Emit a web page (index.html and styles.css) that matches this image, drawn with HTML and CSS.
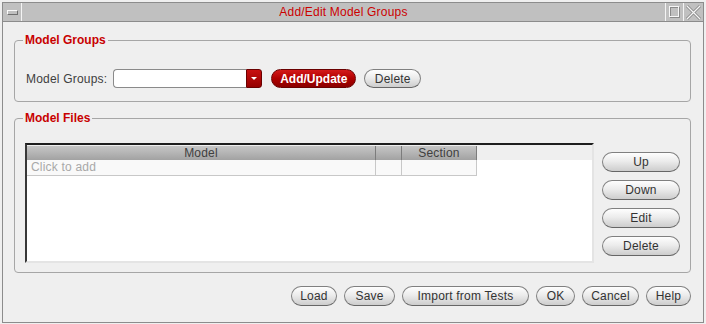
FILE: index.html
```html
<!DOCTYPE html>
<html lang="en">
<head>
    <meta charset="UTF-8">
    <meta name="viewport" content="width=device-width, initial-scale=1.0">
    <link rel="stylesheet" href="styles.css">
    <title>Add/Edit Model Groups</title>
</head>
<body>
    <div class="window">
        <div class="titlebar">
            <div class="tb-menu"><span class="tb-menu-bar"></span></div>
            <div class="tb-title">Add/Edit Model Groups</div>
            <div class="tb-max">
                <svg width="17" height="18" viewBox="0 0 17 18">
                    <rect x="4.5" y="4.5" width="9" height="10" fill="none" stroke="#8a8a8a"/>
                    <rect x="3.5" y="3.5" width="9" height="10" fill="none" stroke="#f6f6f6"/>
                </svg>
            </div>
            <div class="tb-close">
                <svg width="19" height="18" viewBox="0 0 19 18">
                    <path d="M3 3 L16 16 M16 3 L3 16" stroke="#8a8a8a" stroke-width="3" fill="none"/>
                    <path d="M3 3 L16 16 M16 3 L3 16" stroke="#f6f6f6" stroke-width="1.2" fill="none"/>
                </svg>
            </div>
        </div>

        <div class="content">
            <fieldset class="group">
                <legend>Model Groups</legend>
                <div class="group-row">
                    <span class="label">Model Groups:</span>
                    <div class="combo">
                        <div class="combo-field"></div>
                        <div class="combo-arrow"><span class="tri"></span></div>
                    </div>
                    <button class="btn btn-red">Add/Update</button>
                    <button class="btn btn-top">Delete</button>
                </div>
            </fieldset>

            <fieldset class="group files">
                <legend>Model Files</legend>
                <div class="files-body">
                    <div class="table">
                        <div class="thead">
                            <div class="th">Model</div>
                            <div class="th"></div>
                            <div class="th">Section</div>
                        </div>
                        <div class="trow">
                            <div class="td hint">Click to add</div>
                            <div class="td"></div>
                            <div class="td"></div>
                        </div>
                    </div>
                    <div class="side-buttons">
                        <button class="btn btn-side">Up</button>
                        <button class="btn btn-side">Down</button>
                        <button class="btn btn-side">Edit</button>
                        <button class="btn btn-side">Delete</button>
                    </div>
                </div>
            </fieldset>

            <div class="footer">
                <button class="btn btn-load">Load</button>
                <button class="btn btn-save">Save</button>
                <button class="btn btn-import">Import from Tests</button>
                <button class="btn btn-ok">OK</button>
                <button class="btn btn-cancel">Cancel</button>
                <button class="btn btn-help">Help</button>
            </div>
        </div>
    </div>
</body>
</html>
```
FILE: styles.css
```css
* {
    box-sizing: border-box;
}
html, body {
    margin: 0;
    padding: 0;
}
body {
    width: 706px;
    height: 324px;
    overflow: hidden;
    background-color: #efefef;
    font-family: "Liberation Sans", Arial, sans-serif;
    font-size: 12px;
    letter-spacing: 0.2px;
    color: #333;
}
.window {
    margin: 2px 0 0 2px;
    width: 702px;
    height: 321px;
    border: 1px solid #8c8c8c;
    background-color: #efefef;
    display: flex;
    flex-direction: column;
}

/* title bar */
.titlebar {
    height: 19px;
    display: flex;
    background-color: #c0c0c0;
    border-bottom: 1px solid #8c8c8c;
}
.tb-menu {
    width: 19px;
    border-right: 1px solid #f4f4f4;
    display: flex;
    align-items: center;
    justify-content: center;
}
.tb-menu-bar {
    width: 11px;
    height: 5px;
    border-top: 1px solid #fafafa;
    border-left: 1px solid #fafafa;
    border-bottom: 1px solid #6e6e6e;
    border-right: 1px solid #6e6e6e;
}
.tb-title {
    flex: 1;
    text-align: center;
    line-height: 18px;
    color: #cc0000;
}
.tb-max {
    width: 18px;
    border-left: 1px solid #f4f4f4;
}
.tb-close {
    width: 20px;
    border-left: 1px solid #f4f4f4;
}
.tb-max svg, .tb-close svg {
    display: block;
}

/* content */
.content {
    flex: 1;
    padding: 11px 12px 0 11px;
}
.group {
    margin: 0;
    padding: 0;
    min-width: 0;
    border: 1px solid #a6a6a6;
    border-radius: 4px;
}
.group legend {
    margin-left: 8px;
    padding: 0 2px;
    font-weight: bold;
    color: #c80000;
    line-height: 14px;
    letter-spacing: 0;
}
.group-row {
    display: flex;
    align-items: center;
    padding: 22px 0 13px 11px;
}
.label {
    color: #404040;
    margin-right: 6px;
}
.combo {
    display: flex;
    width: 149px;
    height: 19px;
    margin-right: 9px;
}
.combo-field {
    flex: 1;
    background-color: #fff;
    border: 1px solid #8a8a8a;
    border-right: none;
    border-radius: 4px 0 0 4px;
}
.combo-arrow {
    width: 16px;
    background: linear-gradient(#c81010, #960000);
    border: 1px solid #6a0000;
    border-radius: 0 3px 3px 0;
    display: flex;
    align-items: center;
    justify-content: center;
}
.tri {
    width: 0;
    height: 0;
    border-left: 3px solid transparent;
    border-right: 3px solid transparent;
    border-top: 3px solid #fff;
}

/* buttons */
.btn {
    height: 20px;
    padding: 0;
    border: 1px solid #808080;
    border-bottom-color: #666;
    border-radius: 10px;
    background: linear-gradient(#fefefe, #ececec 45%, #cdcdcd);
    font-family: "Liberation Sans", Arial, sans-serif;
    font-size: 12px;
    letter-spacing: 0.2px;
    line-height: 18px;
    color: #333;
}
.btn-red {
    width: 85px;
    height: 19px;
    margin-right: 8px;
    font-weight: bold;
    letter-spacing: 0;
    color: #fff;
    border-color: #6a0000;
    background: linear-gradient(#d41a1a, #b00000 50%, #8a0000);
}
.btn-top {
    width: 57px;
    height: 19px;
}
.btn-load { width: 46px; }
.btn-save { width: 51px; }
.btn-import { width: 127px; }
.btn-ok { width: 39px; }
.btn-cancel { width: 57px; }
.btn-help { width: 45px; }

/* model files table */
.files {
    margin-top: 9px;
}
.files-body {
    display: flex;
    gap: 8px;
    padding: 18px 9px 9px 10px;
}
.table {
    width: 569px;
    height: 120px;
    border-style: solid;
    border-width: 2px;
    border-color: #1e1e1e #e4e4e4 #e4e4e4 #383838;
    background-color: #fff;
}
.thead {
    display: grid;
    grid-template-columns: 349px 26px 75px;
    background-color: #efefef;
    padding-top: 1px;
}
.th {
    height: 14px;
    line-height: 14px;
    text-align: center;
    color: #404040;
    background: linear-gradient(#c6c6c6, #a2a2a2);
    border-right: 1px solid #7c7c7c;
}
.trow {
    display: grid;
    grid-template-columns: 349px 26px 75px;
}
.td {
    height: 16px;
    line-height: 15px;
    background-color: #f9f9f9;
    border-right: 1px solid #c8c8c8;
    border-bottom: 1px solid #c8c8c8;
}
.hint {
    padding-left: 4px;
    color: #a8a8a8;
}
.side-buttons {
    display: flex;
    flex-direction: column;
    gap: 8px;
    padding-top: 9px;
}
.btn-side {
    width: 78px;
}

.footer {
    display: flex;
    justify-content: flex-end;
    gap: 7px;
    padding-top: 13px;
}
```
